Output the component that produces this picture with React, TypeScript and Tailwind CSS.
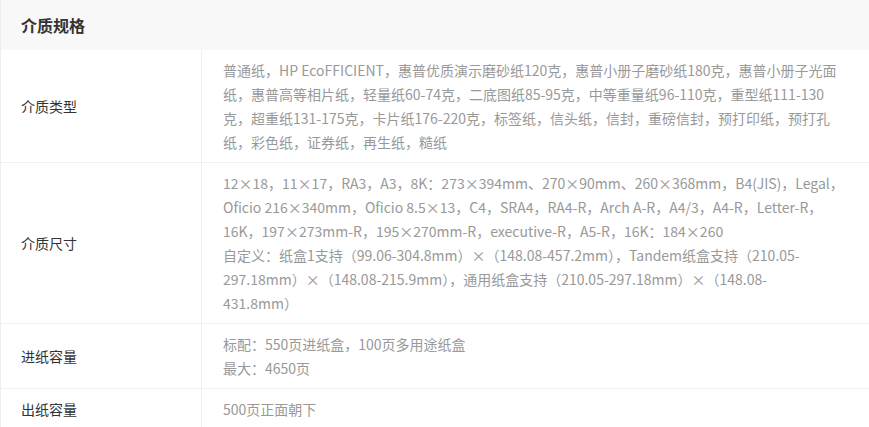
import React from "react";

const rows: { label: string; lines: string[] }[] = [
  {
    label: "介质类型",
    lines: [
      "普通纸，HP EcoFFICIENT，惠普优质演示磨砂纸120克，惠普小册子磨砂纸180克，惠普小册子光面",
      "纸，惠普高等相片纸，轻量纸60-74克，二底图纸85-95克，中等重量纸96-110克，重型纸111-130",
      "克，超重纸131-175克，卡片纸176-220克，标签纸，信头纸，信封，重磅信封，预打印纸，预打孔",
      "纸，彩色纸，证券纸，再生纸，糙纸",
    ],
  },
  {
    label: "介质尺寸",
    lines: [
      "12×18，11×17，RA3，A3，8K：273×394mm、270×90mm、260×368mm，B4(JIS)，Legal，",
      "Oficio 216×340mm，Oficio 8.5×13，C4，SRA4，RA4-R，Arch A-R，A4/3，A4-R，Letter-R，",
      "16K，197×273mm-R，195×270mm-R，executive-R，A5-R，16K：184×260",
      "自定义：纸盒1支持（99.06-304.8mm）×（148.08-457.2mm），Tandem纸盒支持（210.05-",
      "297.18mm）×（148.08-215.9mm），通用纸盒支持（210.05-297.18mm）×（148.08-",
      "431.8mm）",
    ],
  },
  {
    label: "进纸容量",
    lines: ["标配：550页进纸盒，100页多用途纸盒", "最大：4650页"],
  },
  {
    label: "出纸容量",
    lines: ["500页正面朝下"],
  },
];

export default function App() {
  return (
    <div
      className="w-[869px] h-[427px] overflow-hidden bg-white"
      style={{ fontFamily: '"Noto Sans CJK SC", "Noto Sans", sans-serif' }}
    >
      <div className="border-l border-[#eeeeee]">
        <div className="h-[50px] bg-[#f8f8f8] flex items-center pl-[20px]">
          <span className="text-[16px] font-bold text-[#333333]">介质规格</span>
        </div>
        {rows.map((r) => (
          <div key={r.label} className="flex border-b border-[#f0f0f0]">
            <div className="w-[201px] shrink-0 border-r border-[#f0f0f0] flex items-center pl-[20px] text-[14px] text-[#333333]">
              {r.label}
            </div>
            <div className="flex-1 pl-[21px] py-[8px] text-[14px] leading-[24px] text-[#999999]">
              {r.lines.map((l, i) => (
                <div key={i} className="whitespace-nowrap">
                  {l}
                </div>
              ))}
            </div>
          </div>
        ))}
      </div>
    </div>
  );
}
